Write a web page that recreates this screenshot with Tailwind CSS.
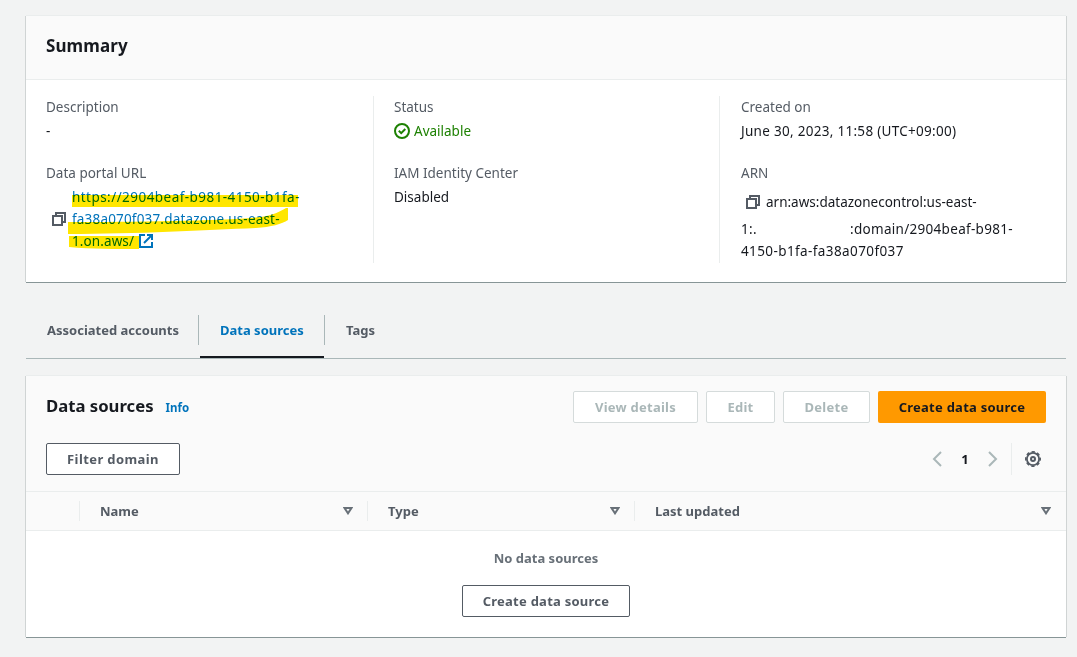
<!DOCTYPE html>
<html lang="en">
<head>
    <meta charset="UTF-8">
    <title>Domain details</title>
    <script src="https://cdn.jsdelivr.net/npm/@tailwindcss/browser@4"></script>
</head>
<body class="h-[657px] overflow-hidden bg-[#f2f3f3] pt-4 pl-[26px] pr-[11px] font-['Noto_Sans','Open_Sans',sans-serif] text-[13.5px] leading-[22px] text-[#16191f]">
    <!-- Summary -->
    <section class="h-[266px] bg-white shadow-[0_-1px_0_#eaeded,-1px_0_0_#d0d4d4,1px_0_0_#d0d4d4,0_1px_0_#879596]">
        <div class="flex h-16 items-center border-b border-[#eaeded] bg-[#fafafa] px-5 pb-1">
            <h2 class="text-[17px] font-bold tracking-[0.1px]"><span>Summary</span></h2>
        </div>
        <div class="flex pt-4">
            <div class="h-[167px] w-[348px] border-r border-[#eaeded] pl-5">
                <div class="text-[#545b64]"><span>Description</span></div>
                <div class="mt-0.5"><span>-</span></div>
                <div class="mt-5 text-[#545b64]"><span>Data portal URL</span></div>
                <div class="relative mt-0.5 flex items-center pl-1.5">
                    <svg class="mr-1.5 h-3.5 w-3.5" viewBox="0 0 14 14" fill="none" stroke="#545b64" stroke-width="2">
                        <path d="M1 4h9v9H1z"></path>
                        <path d="M4 4V1h9v9h-3"></path>
                    </svg>
                    <div class="text-[#0073bb]">
                        <div class="tracking-[0.45px]"><span>https://2904beaf-b981-4150-b1fa-</span></div>
                        <div class="tracking-[0.18px]"><span>fa38a070f037.datazone.us-east-</span></div>
                        <div class="flex items-center tracking-[0.1px]"><span>1.on.aws/</span>
                            <svg class="ml-[5px] h-3.5 w-3.5" viewBox="0 0 14 14" fill="none" stroke="#0073bb" stroke-width="2">
                                <path d="M6 1H1v12h12V8"></path>
                                <path d="M8 1h5v5M13 1L5 9"></path>
                            </svg>
                        </div>
                    </div>
                    <!-- marker strokes -->
                    <svg class="absolute top-0 left-0 h-[66px] w-[270px] mix-blend-multiply" viewBox="0 0 270 66" fill="#ffe600">
                        <path d="M26 9H252V21H26z"></path>
                        <path d="M22 36C90 36 180 35 215 31C228 29 233 26 240 22H242V34C236 38 225 41 210 42C160 44 90 48 22 48z"></path>
                        <path d="M23 50H93V63C70 63 45 63 23 61z"></path>
                    </svg>
                </div>
            </div>
            <div class="h-[167px] w-[346px] border-r border-[#eaeded] pl-5">
                <div class="text-[#545b64]"><span>Status</span></div>
                <div class="mt-0.5 flex items-center text-[#1d8102]">
                    <svg class="mr-1 h-4 w-4" viewBox="0 0 16 16" fill="none" stroke="#1d8102" stroke-width="2">
                        <circle cx="8" cy="8" r="7"></circle>
                        <path d="M4.8 7.8l2.4 2.3L11.3 6"></path>
                    </svg>
                    <span>Available</span>
                </div>
                <div class="mt-5 text-[#545b64]"><span>IAM Identity Center</span></div>
                <div class="mt-0.5"><span>Disabled</span></div>
            </div>
            <div class="pl-[21px]">
                <div class="text-[#545b64]"><span>Created on</span></div>
                <div class="mt-0.5 tracking-[0.29px]"><span>June 30, 2023, 11:58 (UTC+09:00)</span></div>
                <div class="mt-5 text-[#545b64]"><span>ARN</span></div>
                <div class="mt-0.5 flex h-8 items-center pl-[5px]">
                    <svg class="mr-1.5 h-3.5 w-3.5" viewBox="0 0 14 14" fill="none" stroke="#545b64" stroke-width="2">
                        <path d="M1 4h9v9H1z"></path>
                        <path d="M4 4V1h9v9h-3"></path>
                    </svg>
                    <span>arn:aws:datazonecontrol:us-east-</span>
                </div>
                <div class="flex tracking-[0.3px]"><span class="w-[109px]">1:.</span><span>:domain/2904beaf-b981-</span></div>
                <div class="tracking-[0.4px]"><span>4150-b1fa-fa38a070f037</span></div>
            </div>
        </div>
    </section>

    <!-- Tabs -->
    <nav class="mt-[33px] flex h-11 border-b border-[#aab7b8] text-[13px] font-bold text-[#545b64]">
        <div class="h-[30px] w-[173px] border-r border-[#aab7b8] pt-1 pl-[21px]"><span>Associated accounts</span></div>
        <div class="relative h-[30px] w-[126px] border-r border-[#aab7b8] pt-1 pl-[21px] text-[#0073bb]"><span>Data sources</span>
            <div class="absolute top-[41px] left-px h-0.5 w-[124px] bg-[#16191f]"></div>
        </div>
        <div class="pt-1 pl-[21px]"><span>Tags</span></div>
    </nav>

    <!-- Data sources -->
    <section class="mt-[17px] h-[261px] bg-white text-[13px] shadow-[0_-1px_0_#eaeded,-1px_0_0_#d0d4d4,1px_0_0_#d0d4d4,0_1px_0_#879596]">
        <div class="h-[115px] bg-[#fafafa] px-5 pt-[15px]">
            <div class="flex h-8 items-center gap-2 font-bold tracking-[0.25px]">
                <h2 class="mr-1 pb-0.5 text-[16.7px] tracking-normal"><span>Data sources</span></h2>
                <a class="mr-auto pt-0.5 text-[11.5px] tracking-normal text-[#0073bb]"><span>Info</span></a>
                <button class="h-8 w-[125px] rounded-xs border border-[#d5dbdb] bg-white text-[#aab7b8]"><span>View details</span></button>
                <button class="h-8 w-[69px] rounded-xs border border-[#d5dbdb] bg-white text-[#aab7b8]"><span>Edit</span></button>
                <button class="h-8 w-[87px] rounded-xs border border-[#d5dbdb] bg-white text-[#aab7b8]"><span>Delete</span></button>
                <button class="h-8 w-[168px] rounded-xs bg-[#ff9900]"><span>Create data source</span></button>
            </div>
            <div class="mt-5 flex h-8 items-center">
                <button class="mr-auto h-8 w-[134px] rounded-xs border border-[#545b64] bg-white font-bold tracking-[0.4px] text-[#545b64]"><span>Filter domain</span></button>
                <svg class="h-4 w-4" viewBox="0 0 16 16" fill="none" stroke="#aab7b8" stroke-width="2"><path d="M12 1L5 8l7 7"></path></svg>
                <span class="w-10 text-center font-bold">1</span>
                <svg class="h-4 w-4" viewBox="0 0 16 16" fill="none" stroke="#aab7b8" stroke-width="2"><path d="M4 1l7 7-7 7"></path></svg>
                <div class="ml-2.5 flex h-8 items-center border-l border-[#eaeded] pr-[5px] pl-[13px]">
                    <svg class="h-4 w-4" viewBox="0 0 16 16" fill="none" stroke="#545b64">
                        <circle cx="8" cy="8" r="6.1" stroke-width="1.8"></circle>
                        <circle cx="8" cy="8" r="7.2" stroke-width="1.6" stroke-dasharray="3.3 2.355" stroke-dashoffset="1.65"></circle>
                        <circle cx="8" cy="8" r="2" stroke-width="2"></circle>
                    </svg>
                </div>
            </div>
        </div>
        <div class="flex h-10 items-center border-y border-[#eaeded] bg-[#fafafa] font-bold text-[#545b64]">
            <div class="h-5 w-[54px] border-r border-[#eaeded]"></div>
            <div class="flex h-5 w-[288px] items-center justify-between border-r border-[#eaeded] pr-3.5 pl-5"><span>Name</span>
                <svg class="h-2 w-2.5" viewBox="0 0 10 8" fill="none" stroke="#687078" stroke-width="2"><path d="M1.500 1h7L5 6.300z"></path></svg>
            </div>
            <div class="flex h-5 w-[267px] items-center justify-between border-r border-[#eaeded] pr-3.5 pl-5"><span>Type</span>
                <svg class="h-2 w-2.5" viewBox="0 0 10 8" fill="none" stroke="#687078" stroke-width="2"><path d="M1.500 1h7L5 6.300z"></path></svg>
            </div>
            <div class="flex h-5 flex-1 items-center justify-between pr-[15px] pl-5"><span>Last updated</span>
                <svg class="h-2 w-2.5" viewBox="0 0 10 8" fill="none" stroke="#687078" stroke-width="2"><path d="M1.500 1h7L5 6.300z"></path></svg>
            </div>
        </div>
        <div class="flex flex-col items-center pt-4 font-bold">
            <div class="text-[#687078]"><span>No data sources</span></div>
            <button class="mt-4 h-8 w-[168px] rounded-xs border border-[#545b64] bg-white tracking-[0.25px] text-[#545b64]"><span>Create data source</span></button>
        </div>
    </section>
</body>
</html>
